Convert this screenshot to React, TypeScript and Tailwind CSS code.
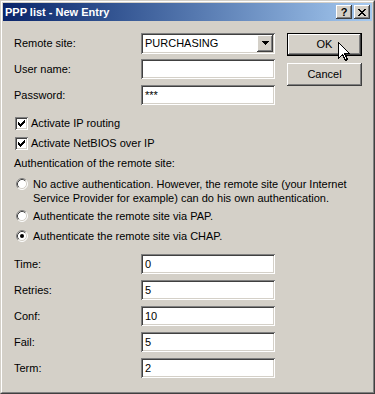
const sunken =
  "shadow-[inset_1px_1px_#808080,inset_-1px_-1px_#ffffff,inset_2px_2px_#404040,inset_-2px_-2px_#d4d0c8]";
const raised =
  "shadow-[inset_-1px_-1px_#404040,inset_1px_1px_#ffffff,inset_-2px_-2px_#808080,inset_2px_2px_#d4d0c8]";

function CloseGlyph() {
  const rows: [number, number][][] = [
    [[0, 2], [6, 2]],
    [[1, 2], [5, 2]],
    [[2, 4]],
    [[3, 2]],
    [[2, 4]],
    [[1, 2], [5, 2]],
    [[0, 2], [6, 2]],
  ];
  return (
    <svg width="8" height="7" viewBox="0 0 8 7" shapeRendering="crispEdges">
      {rows.map((r, y) => r.map(([x, w]) => <rect key={`${y}-${x}`} x={x} y={y} width={w} height={1} fill="#000" />))}
    </svg>
  );
}

function CheckMark() {
  const rows: [number, number][][] = [
    [[6, 1]],
    [[5, 2]],
    [[0, 1], [4, 3]],
    [[0, 2], [3, 3]],
    [[0, 5]],
    [[1, 3]],
    [[2, 1]],
  ];
  return (
    <svg width="7" height="7" viewBox="0 0 7 7" shapeRendering="crispEdges">
      {rows.map((r, y) => r.map(([x, w]) => <rect key={`${y}-${x}`} x={x} y={y} width={w} height={1} fill="#000" />))}
    </svg>
  );
}

function Checkbox({ label }: { label: string }) {
  return (
    <div className="flex items-center h-[20px]">
      <div className={`ml-px w-[13px] h-[13px] bg-white flex items-center justify-center ${sunken}`}>
        <CheckMark />
      </div>
      <span className="ml-[3px]">{label}</span>
    </div>
  );
}

function Radio({ checked }: { checked?: boolean }) {
  return (
    <svg width="12" height="12" viewBox="0 0 12 12" className="shrink-0">
      <circle cx="6" cy="6" r="5" fill="#fff" />
      <path d="M2.11 9.89 A5.5 5.5 0 0 1 9.89 2.11" stroke="#808080" fill="none" />
      <path d="M9.89 2.11 A5.5 5.5 0 0 1 2.11 9.89" stroke="#ffffff" fill="none" />
      <path d="M2.82 9.18 A4.5 4.5 0 0 1 9.18 2.82" stroke="#404040" fill="none" />
      <path d="M9.18 2.82 A4.5 4.5 0 0 1 2.82 9.18" stroke="#d4d0c8" fill="none" />
      {checked && <circle cx="6" cy="6" r="2" fill="#000" />}
    </svg>
  );
}

function RadioRow({ checked, children, className }: { checked?: boolean; children: React.ReactNode; className?: string }) {
  return (
    <div className={`flex items-start leading-[14px] ${className ?? ""}`}>
      <div className="ml-[2px] mt-px">
        <Radio checked={checked} />
      </div>
      <span className="ml-[5px] whitespace-nowrap">{children}</span>
    </div>
  );
}

function Field({ label, value }: { label: string; value: string }) {
  return (
    <div className="flex items-center h-[20px]">
      <span className="w-[127px]">{label}</span>
      <div className={`w-[134px] h-[20px] bg-white flex items-center pl-[4px] ${sunken}`}>{value}</div>
    </div>
  );
}

export default function App() {
  return (
    <div className="relative w-[375px] h-[394px] bg-[#d4d0c8] text-black text-[11px] font-['Liberation_Sans',Arial,sans-serif] border border-t-[#d4d0c8] border-l-[#d4d0c8] border-r-[#404040] border-b-[#404040]">
      <div className="h-full flex flex-col p-px border border-t-white border-l-white border-r-[#808080] border-b-[#808080]">
        <div className="h-[18px] shrink-0 flex items-center bg-linear-to-r from-[#0a246a] to-[#a6caf0]">
          <span className="pl-[2px] text-white font-bold">PPP list - New Entry</span>
          <div className="ml-auto mr-[2px] flex gap-[2px]">
            <div className={`w-[16px] h-[14px] bg-[#d4d0c8] flex items-center justify-center font-bold text-[11px] leading-none ${raised}`}>
              ?
            </div>
            <div className={`w-[16px] h-[14px] bg-[#d4d0c8] flex items-center justify-center ${raised}`}>
              <CloseGlyph />
            </div>
          </div>
        </div>

        <div className="flex-1 pl-[11px] pt-[12px]">
          <div className="flex">
            <div className="w-[273px] flex flex-col gap-[6px]">
              <div className="flex items-center h-[20px]">
                <span className="w-[127px]">Remote site:</span>
                <div className={`w-[134px] h-[21px] bg-white flex items-center pl-[4px] pr-[2px] ${sunken}`}>
                  <span className="flex-1">PURCHASING</span>
                  <div className={`w-[16px] h-[17px] bg-[#d4d0c8] flex items-center justify-center ${raised}`}>
                    <svg width="7" height="4" viewBox="0 0 7 4" shapeRendering="crispEdges">
                      <path d="M0 0h7v1h-1v1h-1v1h-1v1h-1v-1h-1v-1h-1v-1h-1z" fill="#000" />
                    </svg>
                  </div>
                </div>
              </div>
              <div className="flex items-center h-[20px]">
                <span className="w-[127px]">User name:</span>
                <div className={`w-[134px] h-[20px] bg-white ${sunken}`} />
              </div>
              <div className="flex items-center h-[20px]">
                <span className="w-[127px]">Password:</span>
                <div className={`w-[134px] h-[20px] bg-white flex items-center pl-[4px] ${sunken}`}>***</div>
              </div>
            </div>
            <div className="flex flex-col gap-[7px]">
              <button className="w-[75px] h-[23px] border border-black bg-[#d4d0c8] flex items-center justify-center">
                <span className={`w-full h-full flex items-center justify-center ${raised}`}>OK</span>
              </button>
              <button className={`w-[75px] h-[23px] bg-[#d4d0c8] flex items-center justify-center ${raised}`}>Cancel</button>
            </div>
          </div>

          <div className="mt-[8px]">
            <Checkbox label="Activate IP routing" />
            <Checkbox label="Activate NetBIOS over IP" />
          </div>

          <div className="h-[20px] flex items-center">Authentication of the remote site:</div>

          <RadioRow className="mt-[4px]">
            No active authentication. However, the remote site (your Internet
            <br />
            Service Provider for example) can do his own authentication.
          </RadioRow>
          <RadioRow className="mt-[4px]">Authenticate the remote site via PAP.</RadioRow>
          <RadioRow checked className="mt-[6px]">
            Authenticate the remote site via CHAP.
          </RadioRow>

          <div className="mt-[11px] flex flex-col gap-[6px]">
            <Field label="Time:" value="0" />
            <Field label="Retries:" value="5" />
            <Field label="Conf:" value="10" />
            <Field label="Fail:" value="5" />
            <Field label="Term:" value="2" />
          </div>
        </div>
      </div>

      <svg className="absolute left-[337px] top-[41px]" width="13" height="20" viewBox="0 0 13 20" shapeRendering="crispEdges">
        <path d="M0.5 0.5 L0.5 16.5 L4.5 12.5 L7.5 18.5 L9.5 17.5 L6.5 11.5 L11.5 11.5 Z" fill="#fff" stroke="#000" />
      </svg>
    </div>
  );
}
